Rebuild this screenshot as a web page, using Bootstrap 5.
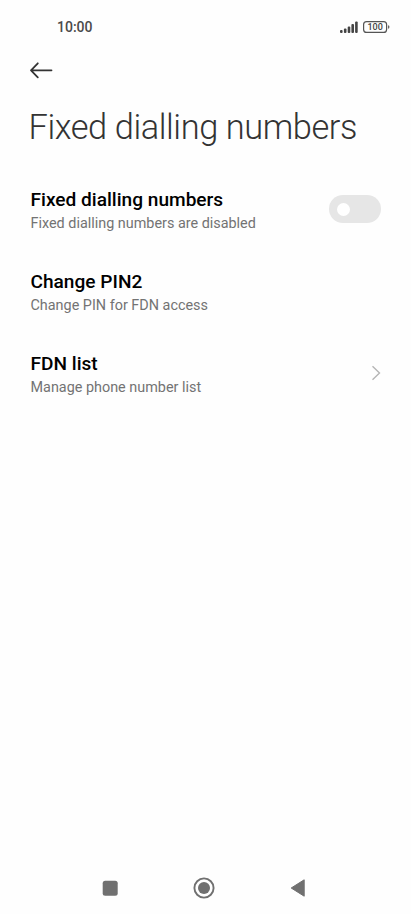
<!DOCTYPE html>
<html lang="en">
<head>
<meta charset="utf-8">
<meta name="viewport" content="width=device-width, initial-scale=1">
<title>Fixed dialling numbers</title>
<link href="https://cdn.jsdelivr.net/npm/bootstrap@5.3.0/dist/css/bootstrap.min.css" rel="stylesheet">
<style>
body { font-family: Roboto, sans-serif; color: #000; background: #fefefe; }
svg { display: block; }
.statusbar { height: 54px; padding: 0 21px 0 57px; }
.clock { font-size: 14px; line-height: 54px; font-weight: 500; color: #4a4a4a; }
.topbar { height: 32px; padding-left: 29px; }
.page-title { font-size: 34.4px; line-height: 42px; font-weight: 300; color: #333; margin: 20px 0 0; padding-left: 28.5px; white-space: nowrap; letter-spacing: -.42px; }
.settings { margin-top: 19px; }
.setting { height: 82px; padding: 0 30px 0 30.5px; }
.setting-text { padding-top: 5px; }
.setting-name { font-size: 19.1px; line-height: 24px; font-weight: 500; }
.setting-note { font-size: 14.4px; line-height: 20px; color: #737373; margin-top: 2px; }
.toggle { width: 52px; height: 28px; background: #e6e6e6; padding-left: 8px; margin-top: 2px; }
.knob { width: 13px; height: 13px; background: #fff; }
.chevron { margin-top: 2px; }
.navkeys { height: 52px; padding: 0 105px 0 102px; }
</style>
</head>
<body>
<div class="vh-100 d-flex flex-column overflow-hidden">
  <header>
    <div class="statusbar d-flex justify-content-between align-items-center">
      <span class="clock">10:00</span>
      <svg width="52" height="14" viewBox="338 20 52 14">
        <g fill="#444"><rect x="340" y="30" width="2.6" height="3" rx="1"/><rect x="343.9" y="28.4" width="2.6" height="4.6" rx="1"/><rect x="347.7" y="26.4" width="2.6" height="6.6" rx="1"/><rect x="351.4" y="24" width="2.6" height="9" rx="1"/><rect x="355.1" y="21.6" width="2.6" height="11.4" rx="1"/></g>
        <rect x="363.6" y="21.6" width="23" height="10.8" rx="3" fill="#fefefe" stroke="#555" stroke-width="1.2"/>
        <path d="M388.2 25.3q1.2 0 1.2 1.7t-1.2 1.7z" fill="#444"/>
        <text x="375.1" y="30.3" text-anchor="middle" font-family="Roboto, sans-serif" font-size="9" font-weight="500" fill="#444">100</text>
      </svg>
    </div>
    <div class="topbar d-flex align-items-center">
      <svg width="24" height="18" viewBox="29 61 24 18" fill="none" stroke="#333" stroke-width="1.8" stroke-linecap="round" stroke-linejoin="round"><path d="M51.5 70.3H31M37.8 63.3L31 70.3L37.8 77.3"/></svg>
    </div>
    <h1 class="page-title">Fixed dialling numbers</h1>
  </header>
  <main class="settings flex-grow-1">
    <div class="setting d-flex align-items-center justify-content-between">
      <div class="setting-text"><div class="setting-name">Fixed dialling numbers</div><div class="setting-note">Fixed dialling numbers are disabled</div></div>
      <div class="toggle rounded-pill d-flex align-items-center"><div class="knob rounded-circle"></div></div>
    </div>
    <div class="setting d-flex align-items-center">
      <div class="setting-text"><div class="setting-name">Change PIN2</div><div class="setting-note">Change PIN for FDN access</div></div>
    </div>
    <div class="setting d-flex align-items-center justify-content-between">
      <div class="setting-text"><div class="setting-name">FDN list</div><div class="setting-note">Manage phone number list</div></div>
      <svg class="chevron" width="10" height="16" viewBox="0 0 10 16" fill="none" stroke="#b5b5b5" stroke-width="1.4"><path d="M1.5 1.2L8.5 8L1.5 14.8"/></svg>
    </div>
  </main>
  <nav class="navkeys d-flex justify-content-between align-items-center">
    <svg width="16" height="16"><rect x=".7" y=".7" width="15" height="15" rx="2.5" fill="#707070"/></svg>
    <svg width="22" height="22"><circle cx="11" cy="11" r="9.6" fill="none" stroke="#707070" stroke-width="1.9"/><circle cx="11" cy="11" r="6" fill="#707070"/></svg>
    <svg width="16" height="20"><path d="M1.2 10L14.2 1.8V18.2z" fill="#707070" stroke="#707070" stroke-linejoin="round"/></svg>
  </nav>
</div>
<script src="https://cdn.jsdelivr.net/npm/bootstrap@5.3.0/dist/js/bootstrap.bundle.min.js"></script>
</body>
</html>
